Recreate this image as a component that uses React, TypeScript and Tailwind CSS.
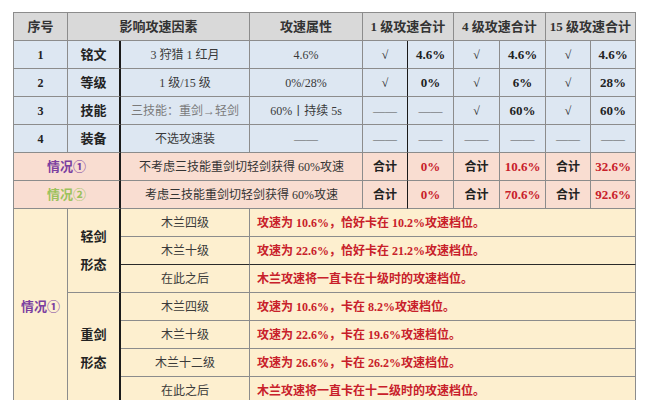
const serif = { fontFamily: '"Liberation Serif", "Noto Sans CJK SC", serif' }

const base = "flex items-center justify-center border-r border-b border-[#8c8c8c] whitespace-nowrap"

function C({ className = "", children }: { className?: string; children?: React.ReactNode }) {
  return <div className={`${base} ${className}`}>{children}</div>
}

const dash = "——"

const blueRows = [
  { n: "1", k: "铭文", d: "3 狩猎 1 红月", a: "4.6%", v: ["√", "4.6%", "√", "4.6%", "√", "4.6%"] },
  { n: "2", k: "等级", d: "1 级/15 级", a: "0%/28%", v: ["√", "0%", "√", "6%", "√", "28%"] },
  { n: "3", k: "技能", d: "三技能：重剑→轻剑", a: "60%丨持续 5s", v: [dash, dash, "√", "60%", "√", "60%"] },
  { n: "4", k: "装备", d: "不选攻速装", a: dash, v: [dash, dash, dash, dash, dash, dash] },
]

const light = [
  { lv: "木兰四级", t: "攻速为 10.6%，恰好卡在 10.2%攻速档位。" },
  { lv: "木兰十级", t: "攻速为 22.6%，恰好卡在 21.2%攻速档位。" },
  { lv: "在此之后", t: "木兰攻速将一直卡在十级时的攻速档位。" },
]
const heavy = [
  { lv: "木兰四级", t: "攻速为 10.6%，卡在 8.2%攻速档位。" },
  { lv: "木兰十级", t: "攻速为 22.6%，卡在 19.6%攻速档位。" },
  { lv: "木兰十二级", t: "攻速为 26.6%，卡在 26.2%攻速档位。" },
  { lv: "在此之后", t: "木兰攻速将一直卡在十二级时的攻速档位。" },
]

function cellTone(v: string, i: number) {
  if (v === dash) return "text-[#555]"
  if (v === "√") return "font-bold text-[#222]"
  if (i % 2 === 1) return "font-bold text-[13px] text-[#222]"
  return ""
}

export default function App() {
  return (
    <div className="w-[647px] h-[400px] overflow-hidden bg-white pt-[12px] pl-[13px]" style={serif}>
      <div className="grid w-[623px] grid-cols-[54px_53px_129px_113px_45px_46px_46px_46px_45px_45px] auto-rows-[28px] border-l border-t border-[#8c8c8c] text-[12px] text-[#3a3a3a]">
        {/* header */}
        <C className="bg-[#d9d9d9] font-bold text-[13px] text-[#333]">序号</C>
        <C className="col-span-2 bg-[#d9d9d9] font-bold text-[13px] text-[#333]">影响攻速因素</C>
        <C className="bg-[#d9d9d9] font-bold text-[13px] text-[#333]">攻速属性</C>
        <C className="col-span-2 bg-[#d9d9d9] font-bold text-[13px] text-[#333]">1 级攻速合计</C>
        <C className="col-span-2 bg-[#d9d9d9] font-bold text-[13px] text-[#333]">4 级攻速合计</C>
        <C className="col-span-2 bg-[#d9d9d9] font-bold text-[13px] text-[#333]">15 级攻速合计</C>

        {blueRows.map((r) => (
          <div key={r.n} className="contents">
            <C className="bg-[#dde7f2] font-bold text-[#222]">{r.n}</C>
            <C className="bg-[#dde7f2] font-bold text-[13px] text-[#222] border-r-[#1a1a1a] border-r-2">{r.k}</C>
            <C className={`bg-[#dde7f2] ${r.n === "3" ? "text-[#7a7a7a]" : ""}`}>{r.d}</C>
            <C className={`bg-[#dde7f2] ${r.a === dash ? "text-[#555]" : ""}`}>{r.a}</C>
            {r.v.map((v, i) => (
              <C key={i} className={`bg-[#dde7f2] ${cellTone(v, i)} ${i === 0 ? "border-r-[#1a1a1a]" : ""}`}>
                {v}
              </C>
            ))}
          </div>
        ))}

        {/* situations */}
        {[
          { label: "情况①", color: "text-[#7b3fa0]", t: "不考虑三技能重剑切轻剑获得 60%攻速", v: ["0%", "10.6%", "32.6%"] },
          { label: "情况②", color: "text-[#9cc25c]", t: "考虑三技能重剑切轻剑获得 60%攻速", v: ["0%", "70.6%", "92.6%"] },
        ].map((s) => (
          <div key={s.label} className="contents">
            <C className={`col-span-2 bg-[#f9ddd1] font-bold text-[13px] border-r-2 border-r-[#1a1a1a] ${s.color}`}>{s.label}</C>
            <C className="col-span-2 bg-[#f9ddd1] text-[#333]">{s.t}</C>
            {s.v.map((v, i) => (
              <div key={i} className="contents">
                <C className={`bg-[#f9ddd1] font-bold text-[12px] text-[#222] ${i === 0 ? "border-r-[#1a1a1a]" : ""}`}>合计</C>
                <C className="bg-[#f9ddd1] font-bold text-[13px] text-[#c8202a]">{v}</C>
              </div>
            ))}
          </div>
        ))}

        {/* detail */}
        <C className="row-span-7 bg-[#fdefcf] font-bold text-[13px] text-[#7b3fa0]">情况①</C>
        <C className="row-span-3 flex-col bg-[#fdefcf] font-bold text-[13px] leading-[28px] text-[#222] border-r-2 border-r-[#1a1a1a]">
          <span>轻剑</span>
          <span>形态</span>
        </C>
        {light.map((l, i) => (
          <div key={l.lv + i} className="contents">
            <C className={`bg-[#fdefcf] text-[#3a3a3a] ${i === 1 ? "border-b-[#2a2a2a]" : ""}`}>{l.lv}</C>
            <C className={`col-span-7 justify-start pl-[7px] bg-[#fdefcf] font-bold text-[#c8202a] ${i === 1 ? "border-b-[#2a2a2a]" : ""}`}>{l.t}</C>
          </div>
        ))}
        <C className="row-span-4 flex-col bg-[#fdefcf] font-bold text-[13px] leading-[28px] text-[#222] border-r-2 border-r-[#1a1a1a]">
          <span>重剑</span>
          <span>形态</span>
        </C>
        {heavy.map((l, i) => (
          <div key={l.lv + i} className="contents">
            <C className="bg-[#fdefcf] text-[#3a3a3a]">{l.lv}</C>
            <C className="col-span-7 justify-start pl-[7px] bg-[#fdefcf] font-bold text-[#c8202a]">{l.t}</C>
          </div>
        ))}
      </div>
    </div>
  )
}
